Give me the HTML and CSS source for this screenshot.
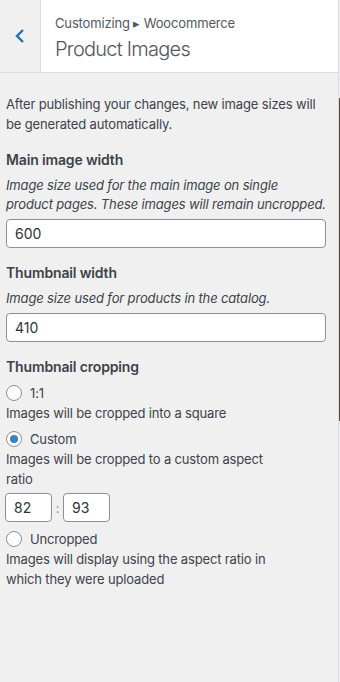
FILE: index.html
```html
<!DOCTYPE html>
<html lang="en">
<head>
  <meta charset="UTF-8">
  <meta name="viewport" content="width=device-width, initial-scale=1.0">
  <title>Product Images</title>
  <link rel="stylesheet" href="styles.css">
</head>
<body>

<div class="layout">
  <div class="panel">
    <header class="panel-head">
      <button class="back-btn" aria-label="Back">
        <svg width="12" height="16" viewBox="0 0 12 16"><path d="M9 2 L3 8 L9 14" fill="none" stroke="#2271b1" stroke-width="2.4"/></svg>
      </button>
      <div class="head-title">
        <span class="crumb">Customizing &#9656; Woocommerce</span>
        <h2>Product Images</h2>
      </div>
    </header>

    <div class="panel-body">
      <p class="notice">After publishing your changes, new image sizes will be generated automatically.</p>

      <div class="field">
        <label class="field-title">Main image width</label>
        <p class="field-desc">Image size used for the main image on single product pages. These images will remain uncropped.</p>
        <input class="text-input" type="text" value="600">
      </div>

      <div class="field">
        <label class="field-title">Thumbnail width</label>
        <p class="field-desc">Image size used for products in the catalog.</p>
        <input class="text-input" type="text" value="410">
      </div>

      <div class="field">
        <label class="field-title">Thumbnail cropping</label>
        <div class="option">
          <label class="radio-row"><span class="radio"></span>1:1</label>
          <p class="option-desc">Images will be cropped into a square</p>
        </div>
        <div class="option">
          <label class="radio-row"><span class="radio checked"></span>Custom</label>
          <p class="option-desc">Images will be cropped to a custom aspect ratio</p>
          <div class="ratio">
            <input class="ratio-input" type="text" value="82">
            <span class="ratio-sep">:</span>
            <input class="ratio-input" type="text" value="93">
          </div>
        </div>
        <div class="option">
          <label class="radio-row"><span class="radio"></span>Uncropped</label>
          <p class="option-desc">Images will display using the aspect ratio in which they were uploaded</p>
        </div>
      </div>
    </div>
  </div>
  <div class="preview-edge"></div>
</div>

</body>
</html>
```

FILE: styles.css
```css
body {
    margin: 0;
    font-family: Inter, "Noto Sans", sans-serif;
    font-size: 13px;
    letter-spacing: -0.15px;
    color: #3c434a;
    background: #f0f0f1;
}
.layout {
    display: flex;
    height: 682px;
}
.panel {
    width: 338px;
    border-right: 1px solid #dcdcde;
    background: #f0f0f1;
}
.preview-edge {
    width: 1px;
    margin-top: 98px;
    height: 323px;
    background: #5a4a42;
}
.panel-head {
    display: flex;
    height: 72px;
    background: #fff;
    border-bottom: 1px solid #dcdcde;
}
.back-btn {
    width: 41px;
    border: 0;
    border-right: 1px solid #dcdcde;
    background: #f0f0f1;
    padding: 0;
    display: flex;
    align-items: center;
    justify-content: center;
}
.head-title {
    padding: 14px 0 0 14px;
    color: #50575e;
}
.crumb {
    display: block;
    font-size: 13px;
    line-height: 18px;
}
.head-title h2 {
    margin: 4px 0 0;
    font-size: 20px;
    font-weight: 300;
    line-height: 26px;
    letter-spacing: -0.75px;
}
.panel-body {
    padding: 21px 12px 0 6px;
}
.notice {
    margin: 0 0 16px;
    line-height: 20px;
}
.field {
    margin-bottom: 15px;
}
.field-title {
    display: block;
    font-size: 14px;
    font-weight: 600;
    line-height: 20px;
    margin-bottom: 6px;
}
.field-desc {
    margin: 0 0 5px;
    font-style: italic;
    line-height: 19px;
}
.text-input {
    display: block;
    box-sizing: border-box;
    width: 100%;
    height: 29px;
    padding: 0 8px;
    font: inherit;
    font-size: 14px;
    color: #2c3338;
    border: 1px solid #8c8f94;
    border-radius: 4px;
    background: #fff;
}
.radio-row {
    display: flex;
    align-items: center;
    gap: 8px;
    line-height: 20px;
}
.radio {
    box-sizing: border-box;
    width: 16px;
    height: 16px;
    border: 1px solid #8c8f94;
    border-radius: 50%;
    background: #fff;
    display: flex;
    align-items: center;
    justify-content: center;
}
.radio.checked::after {
    content: "";
    width: 8px;
    height: 8px;
    border-radius: 50%;
    background: #3582c4;
}
.option-desc {
    max-width: 280px;
    margin: 0 0 6px;
    line-height: 20px;
}
.ratio {
    display: flex;
    align-items: center;
    margin: -2px 0 7px -1px;
}
.ratio-input {
    box-sizing: border-box;
    width: 47px;
    height: 29px;
    padding: 0 8px;
    font: inherit;
    font-size: 14px;
    color: #2c3338;
    border: 1px solid #8c8f94;
    border-radius: 4px;
    background: #fff;
}
.ratio-sep {
    width: 11px;
    text-align: center;
    color: #8c8f94;
}
```
